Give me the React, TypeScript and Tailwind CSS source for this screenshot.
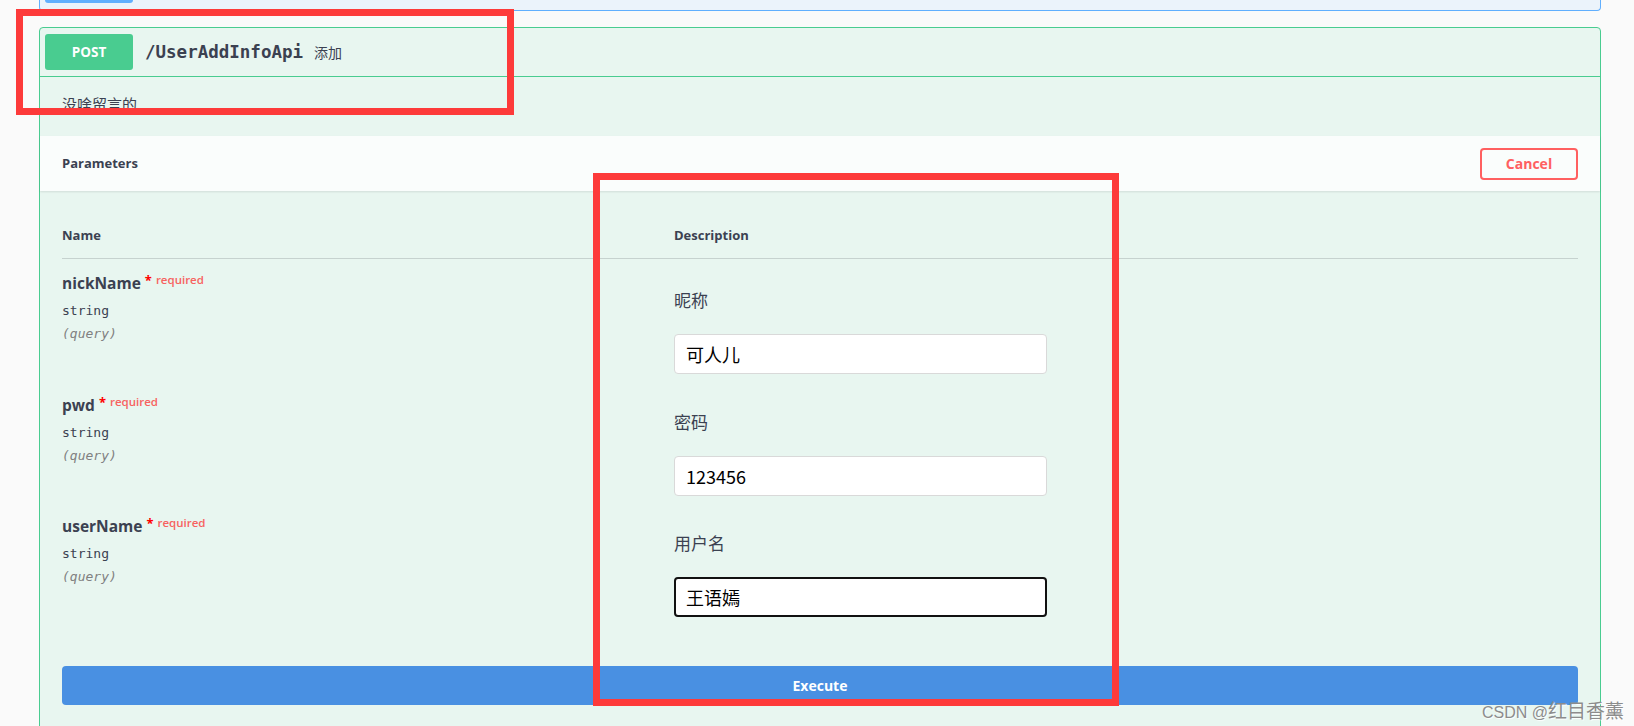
import React from 'react';

const sans = "font-['Open_Sans','Noto_Sans_CJK_SC',sans-serif]";
const mono = "font-['DejaVu_Sans_Mono','Liberation_Mono',monospace]";
const cjk = "font-['Noto_Sans_CJK_SC','Noto_Sans',sans-serif]";

type Param = { name: string; label: string; value: string; focused?: boolean };

const params: Param[] = [
  { name: 'nickName', label: '昵称', value: '可人儿' },
  { name: 'pwd', label: '密码', value: '123456' },
  { name: 'userName', label: '用户名', value: '王语嫣', focused: true },
];

const ParamRow: React.FC<{ p: Param }> = ({ p }) => (
  <div className="flex h-[121.5px]">
    <div className="w-[612px] shrink-0 pt-[13px]">
      <div className="flex items-start leading-[22px]">
        <span className={`${sans} text-[15.5px] font-bold text-[#3b4151]`}>{p.name}</span>
        <span className="ml-[4px] mt-[1px] text-[13px] leading-[14px] font-bold text-[#ff0000]">*</span>
        <span className={`${sans} ml-[4px] mt-[1px] text-[11.5px] leading-[14px] font-semibold text-[#f76260]`}>required</span>
      </div>
      <div className={`${mono} mt-[8px] text-[13px] leading-[18px] text-[#3b4151]`}>string</div>
      <div className={`${mono} mt-[5px] text-[13px] leading-[18px] italic text-[#808080]`}>(query)</div>
    </div>
    <div className="pt-[29px]">
      <div className={`${cjk} text-[17px] leading-[24px] text-[#3b4151]`}>{p.label}</div>
      <input
        readOnly
        value={p.value}
        className={
          p.focused
            ? `${cjk} mt-[22px] block h-[40px] w-[373px] rounded-[4px] border-2 border-[#111] bg-white pl-[10px] text-[18px] text-black outline-none`
            : `${cjk} mt-[22px] block h-[40px] w-[373px] rounded-[4px] border border-[#d9d9d9] bg-white pl-[11px] text-[18px] text-black outline-none`
        }
      />
    </div>
  </div>
);

export default function App() {
  return (
    <div className="relative min-h-screen overflow-hidden bg-[#fafafa]">
      {/* previous operation, mostly scrolled away */}
      <div className="ml-[39px] mr-[33px] h-[11px] rounded-b-[4px] border-x border-b border-[#61affe] bg-[#ebf3fb] px-[5px]">
        <div className="h-[3px] w-[88px] rounded-b-[3px] bg-[#61affe]" />
      </div>

      <div className="ml-[39px] mr-[33px] mt-[16px] rounded-[4px] border border-[#49cc90] bg-[#e8f6f0]">
        <div className="flex h-[49px] items-center border-b border-[#49cc90] px-[5px]">
          <div className={`${sans} flex h-[36px] w-[88px] items-center justify-center rounded-[3px] bg-[#49cc90] text-[13.5px] font-bold text-white`}>
            POST
          </div>
          <span className={`${mono} ml-[12px] text-[17.5px] font-semibold text-[#3b4151]`}>/UserAddInfoApi</span>
          <span className={`${cjk} ml-[11px] text-[14px] text-[#3b4151]`}>添加</span>
        </div>

        <div className="h-[59px] px-[22px] pt-[16px]">
          <p className={`${cjk} text-[15px] leading-[22px] text-[#3b4151]`}>没啥留言的</p>
        </div>

        <div className="flex h-[55px] items-center justify-between bg-[#fafdfc] px-[22px] shadow-[0_1px_2px_rgba(0,0,0,0.1)]">
          <span className={`${sans} text-[13px] font-bold text-[#3b4151]`}>Parameters</span>
          <button className={`${sans} h-[32px] w-[98px] rounded-[4px] border-2 border-[#ff6060] text-[14px] font-bold text-[#ff6060]`}>
            Cancel
          </button>
        </div>

        <div className="px-[22px] pb-[40px]">
          <div className="flex h-[68px] items-end border-b border-[#c6d2cf] pb-[14px]">
            <div className={`${sans} w-[612px] text-[13px] font-bold leading-[18px] text-[#3b4151]`}>Name</div>
            <div className={`${sans} text-[13px] font-bold leading-[18px] text-[#3b4151]`}>Description</div>
          </div>

          {params.map((p) => (
            <ParamRow key={p.name} p={p} />
          ))}

          <button className={`${sans} mt-[42.5px] block h-[39px] w-full rounded-[4px] bg-[#4990e2] text-[14px] font-bold text-white`}>
            Execute
          </button>
        </div>
      </div>

      {/* red annotation frames */}
      <div className="pointer-events-none absolute left-[16px] top-[9px] h-[106px] w-[498px] border-[7px] border-[#fd3a3a]" />
      <div className="pointer-events-none absolute left-[593px] top-[173px] h-[533px] w-[526px] border-[7px] border-[#fd3a3a]" />

      {/* watermark */}
      <div className="pointer-events-none absolute left-[1482px] top-[696px] flex items-baseline whitespace-nowrap text-[#8c8c8c] [text-shadow:1px_1px_1px_#ffffff]">
        <span className="font-['Liberation_Sans',sans-serif] text-[16px]">CSDN @</span>
        <span className={`${cjk} text-[19px]`}>红目香薰</span>
      </div>
    </div>
  );
}
